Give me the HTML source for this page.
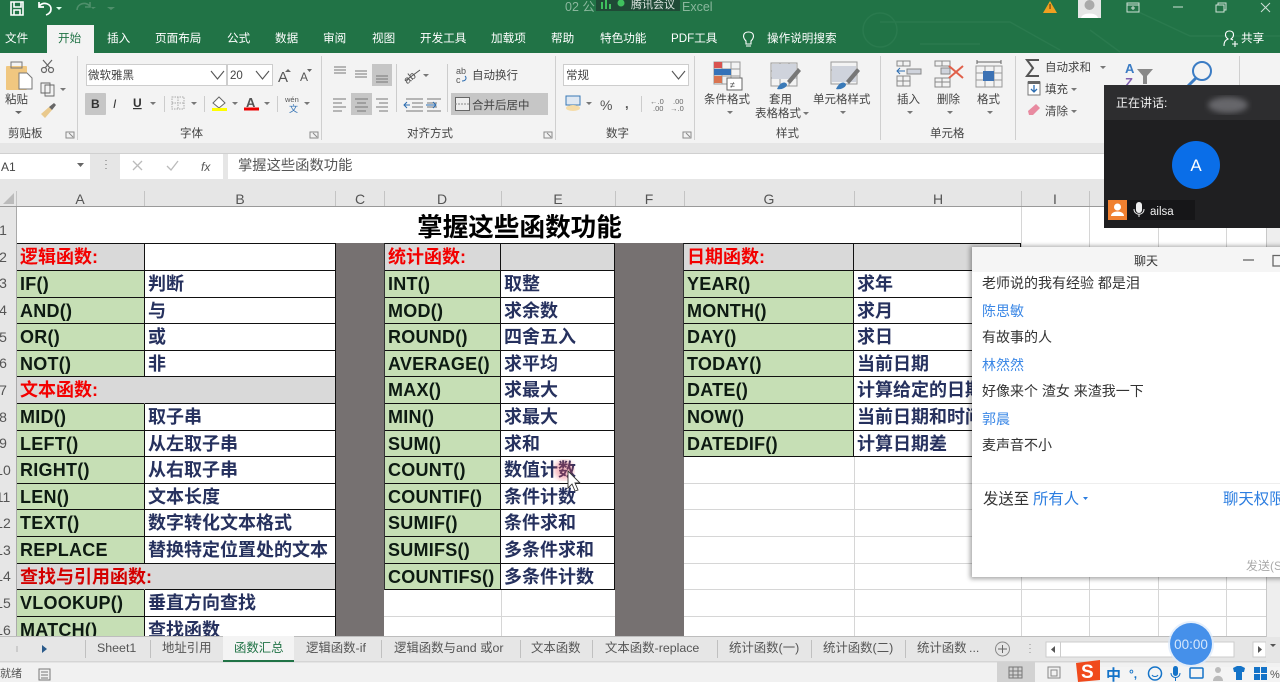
<!DOCTYPE html>
<html lang="zh"><head><meta charset="utf-8"><title>Excel</title>
<style>
html,body{margin:0;padding:0;background:#fff}
body{width:1280px;height:682px;position:relative;overflow:hidden;font-family:"Liberation Sans","Noto Sans CJK SC",sans-serif}
#sheet{position:absolute;left:0;top:207px;width:1280px;height:430px;overflow:hidden;background:#fff;filter:blur(.3px)}
.v{position:absolute;top:36px;bottom:0;width:1px;background:#d6d6d6}
.h{position:absolute;left:0;right:0;height:1px;background:#d6d6d6}
.gc{position:absolute;top:36px;height:400px;background:#767171}
.g{position:absolute;top:36.3px;display:grid;grid-auto-rows:26.62px;border-top:1.2px solid #111;border-left:1px solid #333;box-sizing:border-box}
.g div{box-sizing:border-box;border-right:1.2px solid #111;border-bottom:1.2px solid #111;font-size:18px;font-weight:700;line-height:26px;padding-left:3px;white-space:nowrap;overflow:visible;color:#26315e;background:#fff}
.g .f{background:#c6dfb5;color:#0d1a12;letter-spacing:.25px}
.g .s{background:#d9d9d9;color:#f30000;overflow:visible}
.g .n{border-right-color:transparent;position:relative;z-index:1}
.rn{position:absolute;left:-7px;width:20px;text-align:center;font-size:14px;color:#555;line-height:26px}
#ov{position:absolute;left:0;top:0;filter:blur(.25px)}
#ov text{font-family:"Liberation Sans","Noto Sans CJK SC",sans-serif}
</style></head><body>
<div id="sheet">
<div class="h" style="top:62px;left:1021px"></div><div class="h" style="top:89px;left:1021px"></div>
<div class="h" style="top:249px;left:684px"></div><div class="h" style="top:276px;left:684px"></div><div class="h" style="top:302px;left:684px"></div><div class="h" style="top:329px;left:684px"></div><div class="h" style="top:356px;left:684px"></div><div class="h" style="top:382px;left:384px"></div><div class="h" style="top:409px;left:384px"></div>
<div class="v" style="left:501px;top:360px"></div><div class="v" style="left:854px;top:240px"></div><div class="v" style="left:1021px;top:0"></div><div class="v" style="left:1089px;top:0"></div><div class="v" style="left:1158px;top:0"></div><div class="v" style="left:1226px;top:0"></div>
<div class="gc" style="left:336px;width:48px"></div><div class="gc" style="left:615px;width:69px"></div>
<div style="position:absolute;left:17px;top:3px;width:1005px;text-align:center;font-size:25.6px;font-weight:700;color:#000;line-height:36px">掌握这些函数功能</div>
<div class="g" style="left:16px;grid-template-columns:128px 191px">
<div class="s">逻辑函数:</div><div></div>
<div class="f">IF()</div><div>判断</div>
<div class="f">AND()</div><div>与</div>
<div class="f">OR()</div><div>或</div>
<div class="f">NOT()</div><div>非</div>
<div class="s n">文本函数:</div><div class="s"></div>
<div class="f">MID()</div><div>取子串</div>
<div class="f">LEFT()</div><div>从左取子串</div>
<div class="f">RIGHT()</div><div>从右取子串</div>
<div class="f">LEN()</div><div>文本长度</div>
<div class="f">TEXT()</div><div>数字转化文本格式</div>
<div class="f">REPLACE</div><div>替换特定位置处的文本</div>
<div class="s n" style="color:#d40000">查找与引用函数:</div><div class="s"></div>
<div class="f">VLOOKUP()</div><div>垂直方向查找</div>
<div class="f">MATCH()</div><div>查找函数</div>
</div>
<div class="g" style="left:384px;grid-template-columns:116px 114px">
<div class="s">统计函数:</div><div class="s"></div>
<div class="f">INT()</div><div>取整</div>
<div class="f">MOD()</div><div>求余数</div>
<div class="f">ROUND()</div><div>四舍五入</div>
<div class="f">AVERAGE()</div><div>求平均</div>
<div class="f">MAX()</div><div>求最大</div>
<div class="f">MIN()</div><div>求最大</div>
<div class="f">SUM()</div><div>求和</div>
<div class="f">COUNT()</div><div>数值计数</div>
<div class="f">COUNTIF()</div><div>条件计数</div>
<div class="f">SUMIF()</div><div>条件求和</div>
<div class="f">SUMIFS()</div><div>多条件求和</div>
<div class="f">COUNTIFS()</div><div>多条件计数</div>
</div>
<div class="g" style="left:683px;grid-template-columns:170px 167px">
<div class="s">日期函数:</div><div class="s"></div>
<div class="f">YEAR()</div><div>求年</div>
<div class="f">MONTH()</div><div>求月</div>
<div class="f">DAY()</div><div>求日</div>
<div class="f">TODAY()</div><div>当前日期</div>
<div class="f">DATE()</div><div>计算给定的日期</div>
<div class="f">NOW()</div><div>当前日期和时间</div>
<div class="f">DATEDIF()</div><div>计算日期差</div>
</div>
<div style="position:absolute;left:0;top:0;width:16px;height:430px;background:#e6e6e6;border-right:1px solid #aaa"></div>
<div class="rn" style="top:10px">1</div><div class="rn" style="top:37px">2</div><div class="rn" style="top:63px">3</div><div class="rn" style="top:90px">4</div><div class="rn" style="top:117px">5</div><div class="rn" style="top:143px">6</div><div class="rn" style="top:170px">7</div><div class="rn" style="top:197px">8</div><div class="rn" style="top:223px">9</div><div class="rn" style="top:250px">10</div><div class="rn" style="top:277px">11</div><div class="rn" style="top:303px">12</div><div class="rn" style="top:330px">13</div><div class="rn" style="top:356px">14</div><div class="rn" style="top:383px">15</div><div class="rn" style="top:410px">16</div>
</div>

<svg id="ov" width="1280" height="682" viewBox="0 0 1280 682" xmlns="http://www.w3.org/2000/svg">
<defs><filter id="sh" x="-5%" y="-5%" width="110%" height="110%"><feGaussianBlur stdDeviation="2.5"/></filter><filter id="bl"><feGaussianBlur stdDeviation="3"/></filter></defs>
<!-- title + tabs -->
<rect width="1280" height="53" fill="#217346"/>
<g fill="none" stroke="#2a7a4e" stroke-width="1.5"><path d="M880 22H1010L1060 50M920 44H980M1130 8L1190 36H1280M1090 30L1120 52"/><circle cx="880" cy="30" r="17"/></g>
<g fill="none" stroke="#fff" stroke-width="1.6"><path d="M11 2H23V15H11ZM14 2V7H21V2M14 15V10H20V15"/></g>
<path d="M39 6C44 1 51 4 51 9C51 12 49 14 46 15M39 2V7H44" fill="none" stroke="#fff" stroke-width="1.7"/>
<path d="M56 7H62L59 10Z" fill="#dfe"/>
<path d="M90 6C85 1 77 4 77 10M90 2V7H85" fill="none" stroke="#4f8f6b" stroke-width="1.6"/><path d="M91 7H96L93 9ZM106 3H116M107 7H115L111 10Z" fill="#4f8f6b"/>
<text x="565" y="11" font-size="12.5" fill="#8ab79d">02 公</text><text x="682" y="11" font-size="12.5" fill="#8ab79d">Excel</text>
<rect x="596" y="0" width="84" height="11" fill="#1f4a36"/>
<path d="M601 2h2v7h-2zM605 0h2v9h-2zM609 4h2v5h-2z" fill="#3fc15e"/><circle cx="621" cy="3" r="3.5" fill="#3fc15e"/>
<text x="631" y="8" font-size="11" fill="#dfe6e2">腾讯会议</text>
<path d="M1050 1L1057 13H1043Z" fill="#f0a020"/><rect x="1049.400" y="4" width="1.300" height="5" fill="#7a4a10"/>
<rect x="1078" y="0" width="23" height="18" fill="#e6e6e6"/><circle cx="1089.500" cy="5" r="5" fill="#aaa"/><path d="M1081 18C1082 12 1097 12 1098 18Z" fill="#fff"/>
<g fill="none" stroke="#cfe0d6" stroke-width="1"><path d="M1127 3H1139V12H1127ZM1127 5H1139M1131 8H1135M1133 6V10"/><path d="M1173 7H1183"/><path d="M1216 5H1224V12H1216ZM1218 5V3H1226V10H1224"/><path d="M1261 3L1270 12M1270 3L1261 12"/></g>
<g font-size="11.6" fill="#fff">
<text x="5" y="42">文件</text><text x="107" y="42">插入</text><text x="155" y="42">页面布局</text><text x="227" y="42">公式</text><text x="275" y="42">数据</text><text x="323" y="42">审阅</text><text x="372" y="42">视图</text><text x="420" y="42">开发工具</text><text x="491" y="42">加载项</text><text x="551" y="42">帮助</text><text x="600" y="42">特色功能</text><text x="671" y="42">PDF工具</text><text x="767" y="42">操作说明搜索</text><text x="1241" y="42">共享</text>
</g>
<path d="M746 41C742 37 743 32 748.500 32C754 32 755 37 751 41V44H746ZM746 46H751" fill="none" stroke="#fff" stroke-width="1.100"/>
<path d="M1224 46C1224 41 1226 40 1228 39C1224 36 1225 31 1229.500 31C1234 31 1235 36 1231 39L1233 40M1232 44H1238M1235 41V47" fill="none" stroke="#fff" stroke-width="1.100"/>
<rect y="53" width="1280" height="90" fill="#f3f3f3"/>
<rect x="47" y="25" width="47" height="29" fill="#f3f3f3"/><text x="58" y="42" font-size="11.600" fill="#217346">开始</text>
<rect y="143" width="1280" height="64" fill="#e6e6e6"/><rect y="153" width="1280" height="1" fill="#d0d0d0"/>
<g fill="#cfcfcf"><rect x="77" y="56" width="1" height="84"/><rect x="321" y="56" width="1" height="84"/><rect x="555" y="56" width="1" height="84"/><rect x="694" y="56" width="1" height="84"/><rect x="880" y="56" width="1" height="84"/><rect x="1015" y="56" width="1" height="84"/><rect x="1239" y="56" width="1" height="84"/></g>
<!-- clipboard icons -->
<rect x="6" y="66" width="21" height="24" rx="1" fill="#f0c780"/><rect x="11" y="62" width="11" height="6" fill="none" stroke="#777"/><path d="M19 73H27L32 78V89H19Z" fill="#fff" stroke="#777"/>
<path d="M15 111H22L18.500 114Z" fill="#666"/>
<g fill="none" stroke="#666" stroke-width="1.200"><circle cx="44" cy="70" r="2.500"/><circle cx="51" cy="70" r="2.500"/><path d="M43 60L50 68M52 60L45 68"/><path d="M41 83H50V93H41ZM45 85H54V96H45Z" fill="#f3f3f3" stroke-width=".9"/></g><path d="M60 88H66L63 91Z" fill="#777"/>
<path d="M41 114L49 107L52 110L45 118Z" fill="#e9c98d"/><path d="M49 107L54 103L56 105L52 110Z" fill="#666"/>
<!-- font -->
<rect x="86.500" y="64.500" width="140" height="21" fill="#fff" stroke="#cdcdcd"/><rect x="227.500" y="64.500" width="45" height="21" fill="#fff" stroke="#cdcdcd"/>
<g fill="none" stroke="#555" stroke-width="1.100"><path d="M211 71L217.500 79L224 71M256 71L262.500 79L269 71M672 71L678.500 79L685 71"/></g>
<text x="278" y="82" font-size="15" fill="#555">A</text><text x="300" y="81" font-size="12" fill="#555">A</text><path d="M288 69L291 72H285ZM307 69H312L309.500 72Z" fill="#666"/>
<rect x="85" y="93" width="21" height="22" fill="#c6c6c6" rx="1"/>
<text x="91" y="108" font-size="12" font-weight="700" fill="#333">B</text><text x="113" y="108" font-size="12" font-style="italic" fill="#333" font-family="Liberation Serif">I</text><text x="133" y="107" font-size="12" fill="#333" font-weight="700" text-decoration="underline">U</text>
<g fill="#777"><path d="M150 102H156L153 105ZM191 102H197L194 105ZM232 102H238L235 105ZM264 102H270L267 105ZM304 102H310L307 105ZM535 103H541L538 106Z"/></g>
<path d="M172 97H184V109H172ZM178 97V109M172 103H184" fill="none" stroke="#aaa" stroke-dasharray="1.500 1"/>
<path d="M213 103L219 97L225 103L219 108Z" fill="#fff" stroke="#666"/><rect x="212" y="108" width="15" height="3" fill="#ff0"/>
<text x="246" y="107" font-size="13" font-weight="700" fill="#555">A</text><rect x="244" y="107.500" width="15" height="3" fill="#e00"/>
<text x="285" y="102" font-size="7.500" fill="#555">wén</text><text x="289" y="112" font-size="9" fill="#2b6cb0">文</text>
<g fill="#ccc"><rect x="164" y="96" width="1" height="16"/><rect x="204" y="96" width="1" height="16"/><rect x="277" y="96" width="1" height="16"/><rect x="396" y="64" width="1" height="48"/><rect x="447" y="64" width="1" height="48"/><rect x="641" y="96" width="1" height="16"/></g>
<g fill="none" stroke="#8a8a8a" stroke-width="1"><path d="M66 132H74V138H66ZM69 133L73 137"/><path d="M310 132H318V138H310ZM313 133L317 137"/><path d="M544 132H552V138H544ZM547 133L551 137"/><path d="M683 132H691V138H683ZM686 133L690 137"/></g>
<!-- align -->
<rect x="372" y="64" width="20" height="22" fill="#c6c6c6"/><rect x="351" y="93" width="21" height="22" fill="#c6c6c6"/>
<g fill="none" stroke="#777" stroke-width="1"><path d="M334 67H346M334 70H346M334 73H346M355 71H367M355 74H367M355 77H367M376 76H388M376 79H388M376 82H388"/>
<path d="M333 99H346M333 103H342M333 107H346M333 111H342M355 99H368M357 103H366M355 107H368M357 111H366M376 99H388M379 103H388M376 107H388M379 111H388"/>
<path d="M406 99H423M412 103H423M412 107H423M406 111H423M427 99H441M427 103H437M427 107H437M427 111H441"/></g>
<path d="M410 105L404 105M407 102L404 105L407 108M426 105H436M433 102L436 105L433 108" stroke="#2b6cb0" fill="none"/>
<text x="402" y="82" font-size="11" fill="#555" transform="rotate(-40 408 76)">ab</text><path d="M405 81L420 70" stroke="#555"/><path d="M423 74H429L426 77Z" fill="#777"/>
<text x="456" y="74" font-size="9" fill="#555">ab</text><text x="456" y="83" font-size="9" fill="#555">c</text><path d="M462 81C466 81 467 78 465 76" fill="none" stroke="#2b6cb0"/>
<rect x="451" y="93" width="97" height="22" fill="#c6c6c6"/><rect x="455.500" y="97.500" width="14" height="13" fill="#eee" stroke="#666"/><path d="M455 104H470" stroke="#888" stroke-dasharray="2 1"/>
<!-- number -->
<rect x="563.500" y="64.500" width="125" height="21" fill="#fff" stroke="#cdcdcd"/>
<path d="M672 71L678.500 79L685 71" fill="none" stroke="#555" stroke-width="1.100"/>
<rect x="566" y="96" width="14" height="9" fill="#dfe8f2" stroke="#3878b5"/><ellipse cx="573" cy="108" rx="7" ry="3" fill="#f5dca9"/><path d="M586 102H592L589 105Z" fill="#777"/>
<text x="600" y="110" font-size="14" fill="#555">%</text><text x="625" y="108" font-size="13" font-weight="700" fill="#555">,</text>
<text x="650" y="104" font-size="7.500" fill="#666">←.0</text><text x="653" y="111" font-size="7.500" fill="#666">.00</text><text x="673" y="104" font-size="7.500" fill="#666">.00</text><text x="670" y="111" font-size="7.500" fill="#666">→.0</text>
<!-- styles -->
<g fill="none" stroke="#999"><path d="M714 62H740V84H714ZM714 69H740M714 76H740M722 62V84M731 62V84"/></g><rect x="714" y="62" width="8" height="6" fill="#d9534f"/><rect x="714" y="69" width="17" height="6" fill="#3572b8"/><rect x="714" y="76" width="8" height="7" fill="#d9734f"/><rect x="727" y="78" width="15" height="12" fill="#fff" stroke="#666"/><text x="730" y="88" font-size="9" fill="#444">≠</text>
<g fill="none" stroke="#999"><path d="M771 63H797V86H771ZM771 71H797M771 78H797M780 63V86M789 63V86"/><path d="M831 62H857V84H831ZM831 70H857"/></g><rect x="772" y="64" width="24" height="15" fill="#cfd3dc"/><rect x="832" y="66" width="24" height="16" fill="#cfd3dc"/>
<path d="M777 89C781 80 787 82 787 85C786 88 781 90 777 89Z" fill="#3a7ab8"/><path d="M787 81L798 68L801 71L790 84Z" fill="#777"/>
<path d="M836 89C840 80 846 82 846 85C845 88 840 90 836 89Z" fill="#3a7ab8"/><path d="M846 81L857 68L860 71L849 84Z" fill="#777"/>
<path d="M727 111H733L730 114ZM840 111H846L843 114ZM803 112H809L806 115ZM907 111H913L910 114ZM947 111H953L950 114ZM987 111H993L990 114ZM1100 66H1106L1103 69ZM1071 88H1077L1074 91ZM1071 110H1077L1074 113Z" fill="#777"/>
<!-- cells -->
<g fill="none" stroke="#888"><path d="M897 61H910V66H897ZM903 61V66M897 76H910V86H897ZM903 76V86M897 81H910"/><path d="M935 61H950V66H935ZM942 61V66M935 78H950V87H935ZM942 78V87M935 82H950"/></g>
<rect x="907" y="69" width="14" height="5" fill="#cfd3dc" stroke="#888"/><path d="M905 71H897M900 68L897 71L900 74" stroke="#2b6cb0" fill="none"/>
<rect x="941" y="68" width="9" height="6" fill="#cfd3dc" stroke="#888"/><path d="M949 66L963 78M963 66L949 78" stroke="#e0604a" stroke-width="2"/>
<path d="M976 66H1002V87H976ZM976 73H1002M976 80H1002M985 66V87M994 66V87" fill="none" stroke="#999"/><rect x="983" y="71" width="11" height="10" fill="#3d72b4"/><path d="M977 62H1001M977 60V64M1001 60V64" stroke="#666" fill="none"/>
<!-- editing -->
<path d="M1039 60H1027L1033 68L1027 76H1039" fill="none" stroke="#555" stroke-width="2"/>
<rect x="1028" y="82" width="12" height="13" fill="#fff" stroke="#777"/><rect x="1028" y="81" width="12" height="3" fill="#666"/><path d="M1034 85V92M1031 89L1034 92L1037 89" stroke="#2b6cb0" fill="none" stroke-width="1.300"/>
<path d="M1028 111L1036 104L1040 108L1033 115H1029Z" fill="#e88aa0"/>
<text x="1125" y="73" font-size="13" font-weight="700" fill="#3b7cc4">A</text><text x="1125" y="87" font-size="13" font-weight="700" fill="#8060b0">Z</text><path d="M1137 69H1153L1147 76V84H1143V76Z" fill="#888"/>
<circle cx="1202" cy="71" r="9" fill="none" stroke="#3b7cc4" stroke-width="2"/><path d="M1196 78L1188 86" stroke="#3b7cc4" stroke-width="3"/>
<!-- ribbon text -->
<g font-size="11.500" fill="#444">
<text x="8" y="137">剪贴板</text><text x="180" y="137">字体</text><text x="407" y="137">对齐方式</text><text x="606" y="137">数字</text><text x="776" y="137">样式</text><text x="930" y="137">单元格</text>
<text x="5" y="103">粘贴</text>
<text x="88" y="79">微软雅黑</text><text x="230" y="79">20</text>
<text x="472" y="79">自动换行</text><text x="472" y="109">合并后居中</text><text x="566" y="79">常规</text>
<text x="704" y="103">条件格式</text><text x="769" y="103">套用</text><text x="755" y="117">表格格式</text><text x="813" y="103">单元格样式</text>
<text x="897" y="103">插入</text><text x="937" y="103">删除</text><text x="977" y="103">格式</text>
<text x="1045" y="71">自动求和</text><text x="1045" y="93">填充</text><text x="1045" y="115">清除</text>
</g>
<!-- formula bar -->
<rect x="0" y="154" width="90" height="25" fill="#fff"/><text x="1" y="171" font-size="12" fill="#444">A1</text><path d="M77 163H84L80.500 167Z" fill="#666"/>
<path d="M106 160v1M106 164v1M106 168v1" stroke="#aaa" stroke-width="2"/>
<rect x="120" y="154" width="103" height="25" fill="#fff"/><rect x="228" y="154" width="1052" height="25" fill="#fff"/>
<path d="M133 161L142 170M142 161L133 170" stroke="#bbb" stroke-width="1.300"/><path d="M167 166L171 170L178 161" stroke="#bbb" stroke-width="1.300" fill="none"/>
<text x="201" y="171" font-size="12" font-style="italic" fill="#555" font-family="Liberation Serif">fx</text>
<text x="238" y="170" font-size="14.300" fill="#555">掌握这些函数功能</text>
<!-- header row -->
<rect y="181" width="1280" height="26" fill="#e6e6e6"/><rect y="206" width="1280" height="1" fill="#9a9a9a"/>
<path d="M14 193V204H3Z" fill="#bbb"/>
<g fill="#c4c4c4"><rect x="16" y="191" width="1" height="15"/><rect x="144" y="191" width="1" height="15"/><rect x="335" y="191" width="1" height="15"/><rect x="384" y="191" width="1" height="15"/><rect x="501" y="191" width="1" height="15"/><rect x="615" y="191" width="1" height="15"/><rect x="684" y="191" width="1" height="15"/><rect x="854" y="191" width="1" height="15"/><rect x="1021" y="191" width="1" height="15"/><rect x="1089" y="191" width="1" height="15"/></g>
<g font-size="14" fill="#555" text-anchor="middle"><text x="80" y="204">A</text><text x="240" y="204">B</text><text x="360" y="204">C</text><text x="442" y="204">D</text><text x="558" y="204">E</text><text x="649" y="204">F</text><text x="769" y="204">G</text><text x="938" y="204">H</text><text x="1055" y="204">I</text></g>
<!-- pointer -->
<circle cx="564" cy="470" r="10" fill="#e8485a" opacity=".35" filter="url(#sh)"/>
<path d="M568 471V488L572 484L575 491L578 490L575 483L580 483Z" fill="#fff" stroke="#333" stroke-width=".9"/>
<!-- tabs -->
<rect y="637" width="1280" height="25" fill="#e6e6e6"/><rect y="636" width="1280" height="1" fill="#bdbdbd"/><rect y="662" width="1280" height="20" fill="#f1f1f1"/><rect y="661.500" width="1280" height=".8" fill="#c4c4c4"/>
<rect x="223" y="636" width="71" height="25" fill="#f4f4f4"/><rect x="223" y="660" width="71" height="2" fill="#217346"/>
<path d="M42 645L47 649L42 653Z" fill="#2a5a8a"/><path d="M17 646v6" stroke="#ccc" stroke-width="2"/>
<g font-size="12.400" fill="#555"><text x="97" y="652">Sheet1</text><text x="162" y="652">地址引用</text><text x="306" y="652">逻辑函数-if</text><text x="394" y="652">逻辑函数与and 或or</text><text x="531" y="652">文本函数</text><text x="605" y="652">文本函数-replace</text><text x="729" y="652">统计函数(一)</text><text x="823" y="652">统计函数(二)</text><text x="917" y="652">统计函数</text><text x="969" y="652">...</text></g>
<text x="234" y="652" font-size="12.400" fill="#217346">函数汇总</text>
<g fill="#c0c0c0"><rect x="85" y="640" width="1" height="18"/><rect x="150" y="640" width="1" height="18"/><rect x="381" y="640" width="1" height="18"/><rect x="520" y="640" width="1" height="18"/><rect x="592" y="640" width="1" height="18"/><rect x="717" y="640" width="1" height="18"/><rect x="811" y="640" width="1" height="18"/><rect x="905" y="640" width="1" height="18"/></g>
<circle cx="1002.500" cy="649" r="7" fill="none" stroke="#888"/><path d="M998 649H1007M1002.500 645V653" stroke="#666"/>
<path d="M1030 644v1M1030 648v1M1030 652v1" stroke="#bbb" stroke-width="2"/>
<rect x="1046" y="642" width="188" height="15" fill="#fff" stroke="#ccc"/><path d="M1060.500 642V657" stroke="#ccc"/><path d="M1055 646V653L1051 649.500Z" fill="#555"/>
<rect x="1253" y="642" width="13" height="15" fill="#fff" stroke="#ccc"/><path d="M1258 646V653L1262 649.500Z" fill="#555"/>
<rect x="1266" y="207" width="14" height="430" fill="#eee"/><rect x="1266" y="207" width="1" height="430" fill="#c8c8c8"/><rect x="1266" y="637" width="14" height="25" fill="#e6e6e6"/><path d="M1270 644H1276L1273 647Z" fill="#555"/>
<!-- status -->
<text x="0" y="677" font-size="11" fill="#555">就绪</text><path d="M39 669H50V680H39ZM41 672H48M41 675H48M41 678H48" fill="none" stroke="#777"/>
<rect x="997" y="662" width="38" height="20" fill="#d2d2d2"/><path d="M1009 667H1022V678H1009ZM1013 667V678M1018 667V678M1009 671H1022M1009 675H1022" fill="none" stroke="#777"/>
<path d="M1048 667H1060V678H1048ZM1051 670H1057V676H1051Z" fill="none" stroke="#888"/>
<rect x="1100" y="667" width="180" height="15" fill="#f4f4f4"/>
<path d="M1076 663L1100 660V680L1078 682Z" fill="#f04a1c"/><text x="1081" y="678" font-size="19" font-weight="700" fill="#fff">S</text>
<text x="1106" y="680" font-size="15" font-weight="700" fill="#1473c8">中</text><text x="1129" y="678" font-size="12" font-weight="700" fill="#1473c8">°,</text>
<circle cx="1155" cy="673.500" r="6.500" fill="none" stroke="#1473c8" stroke-width="1.500"/><path d="M1152 675C1153 677 1157 677 1158 675" stroke="#1473c8" fill="none"/><rect x="1173" y="666" width="5" height="10" rx="2.500" fill="#1473c8"/><path d="M1171 673C1171 679 1180 679 1180 673M1175.500 678V681" stroke="#1473c8" fill="none"/>
<rect x="1190" y="668" width="13" height="10" rx="1" fill="none" stroke="#1473c8" stroke-width="1.500"/>
<circle cx="1218" cy="670" r="3" fill="#bbb"/><path d="M1213 681C1213 674 1223 674 1223 681Z" fill="#bbb"/>
<path d="M1233 668L1237 666H1241L1245 668L1244 672H1242V680H1236V672H1234Z" fill="#1473c8"/>
<path d="M1254 667H1260V673H1254ZM1261 667H1267V673H1261ZM1254 674H1260V680H1254ZM1261 674H1267V680H1261Z" fill="#1473c8"/>
<text x="1270" y="678" font-size="11" fill="#555">%</text>
<!-- timer -->
<circle cx="1191" cy="644" r="23" fill="#dbe9fb" opacity=".7"/><circle cx="1191" cy="644" r="21" fill="#4590ea"/><text x="1191" y="649" font-size="13.500" fill="#d5e7fb" text-anchor="middle">00:00</text>
<!-- chat -->
<rect x="970" y="246" width="320" height="333" fill="#000" opacity=".35" filter="url(#sh)"/>
<rect x="972" y="247" width="308" height="330" fill="#fff"/><rect x="972" y="247" width="308" height="25" fill="#f5f5f5"/>
<text x="1146" y="265" font-size="12" fill="#333" text-anchor="middle">聊天</text><path d="M1243 260H1254" stroke="#666" stroke-width="1.300"/><path d="M1273 255.500H1285V266H1273Z" fill="none" stroke="#666" stroke-width="1.300"/>
<g font-size="14" fill="#333"><text x="982" y="288">老师说的我有经验 都是泪</text><text x="982" y="342">有故事的人</text><text x="982" y="396">好像来个 渣女 来渣我一下</text><text x="982" y="450">麦声音不小</text></g>
<g font-size="14" fill="#3a87e6"><text x="982" y="316">陈思敏</text><text x="982" y="370">林然然</text><text x="982" y="424">郭晨</text></g>
<rect x="972" y="483" width="308" height="1" fill="#eee"/>
<text x="983" y="504" font-size="15.400" fill="#333">发送至</text><text x="1033" y="504" font-size="15.400" fill="#2b7de0">所有人</text><path d="M1083 497H1088L1085.500 500Z" fill="#2b7de0"/>
<text x="1223" y="504" font-size="15.400" fill="#2b7de0">聊天权限</text>
<text x="1246" y="570" font-size="12" fill="#aaa">发送(S)</text>
<!-- video -->
<rect x="1104" y="85" width="176" height="143" fill="#1f1f21"/><rect x="1104" y="85" width="176" height="35" fill="#2d2d2f"/>
<text x="1116" y="107" font-size="12" fill="#f0f0f0">正在讲话:</text><ellipse cx="1228" cy="105" rx="20" ry="8" fill="#66666a" filter="url(#bl)"/>
<circle cx="1196" cy="165" r="24" fill="#0a6ee8"/><text x="1196" y="171" font-size="17" fill="#fff" text-anchor="middle">A</text>
<rect x="1108" y="200" width="87" height="20" fill="#161618"/><rect x="1108" y="200" width="19" height="20" fill="#f08030"/><circle cx="1117.500" cy="207" r="3.500" fill="#fff"/><path d="M1111 216C1111 210 1124 210 1124 216Z" fill="#fff"/>
<rect x="1136" y="202" width="6" height="11" rx="3" fill="#eee"/><path d="M1134 209C1134 216 1144 216 1144 209M1139 214V217" stroke="#eee" fill="none"/>
<text x="1150" y="215" font-size="11.500" fill="#eee">ailsa</text>
</svg>
</body></html>
